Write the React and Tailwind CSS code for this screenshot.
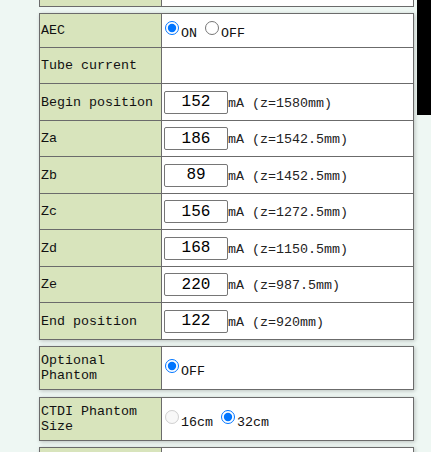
import React from 'react';

const mono = "font-['Liberation_Mono','Courier_New',monospace]";

const currents = [
  { label: 'Begin position', value: '152', z: '1580mm', h: 'h-[37px]' },
  { label: 'Za', value: '186', z: '1542.5mm', h: 'h-[36px]' },
  { label: 'Zb', value: '89', z: '1452.5mm', h: 'h-[37px]' },
  { label: 'Zc', value: '156', z: '1272.5mm', h: 'h-[36px]' },
  { label: 'Zd', value: '168', z: '1150.5mm', h: 'h-[37px]' },
  { label: 'Ze', value: '220', z: '987.5mm', h: 'h-[36px]' },
  { label: 'End position', value: '122', z: '920mm', h: 'h-[37px]' },
];

function Row({ label, h, first, children }) {
  return (
    <div className={`grid grid-cols-[122px_1fr] ${h} ${first ? '' : 'border-t border-[#6b6b6b]'}`}>
      <div className="bg-[#d8e4bc] border-r border-[#6b6b6b] flex items-center pl-[1px] pr-1 leading-[15px]">
        {label}
      </div>
      <div className="flex items-center pl-[2px]">{children}</div>
    </div>
  );
}

function Radio({ checked, disabled, first }) {
  return (
    <input
      type="radio"
      readOnly
      checked={checked}
      disabled={disabled}
      className={`w-[14px] h-[14px] m-0 mr-[2px] align-[2px] ${first ? 'ml-[1px]' : ''} accent-[#0075ff]`}
    />
  );
}

function Box({ children, className = '' }) {
  return (
    <div className={`bg-white border border-[#6b6b6b] shadow-[1px_1px_4px_rgba(0,0,0,0.22)] ${className}`}>
      {children}
    </div>
  );
}

export default function App() {
  return (
    <div className={`relative h-[452px] bg-[#eef7f3] text-[13.33px] text-[#111] ${mono} overflow-hidden`}>
      <div className="absolute top-0 right-0 w-[14px] h-[115px] bg-black" />

      <div className="ml-[39px] w-[375px]">
        {/* tail of the previous table */}
        <div className="h-[7px] grid grid-cols-[122px_1fr] bg-white border-x border-b border-[#6b6b6b]">
          <div className="bg-[#d8e4bc] border-r border-[#6b6b6b]" />
          <div />
        </div>

        <Box className="mt-[6px]">
          <Row label="AEC" h="h-[33px]" first>
            <span className="whitespace-nowrap pt-[4px]">
              <Radio checked first />ON <Radio />OFF
            </span>
          </Row>
          <Row label="Tube current" h="h-[36px]" />
          {currents.map((c) => (
            <Row key={c.label} label={c.label} h={c.h}>
              <span className="whitespace-nowrap">
                <input
                  readOnly
                  value={c.value}
                  className={`w-[64px] h-[23px] border border-[#767676] rounded-[2px] text-center text-[16px] text-black bg-white ${mono}`}
                />
                <span className="text-[#222]">mA (z={c.z})</span>
              </span>
            </Row>
          ))}
        </Box>

        <Box className="mt-[6px]">
          <Row label="Optional Phantom" h="h-[42px]" first>
            <span className="whitespace-nowrap pt-[4px]">
              <Radio checked first />OFF
            </span>
          </Row>
        </Box>

        <Box className="mt-[7px]">
          <Row label="CTDI Phantom Size" h="h-[42px]" first>
            <span className="whitespace-nowrap pt-[4px]">
              <Radio disabled first />16cm <Radio checked />32cm
            </span>
          </Row>
        </Box>

        <Box className="mt-[6px] h-[30px]">
          <div className="grid grid-cols-[122px_1fr] h-full">
            <div className="bg-[#d8e4bc] border-r border-[#6b6b6b]" />
            <div />
          </div>
        </Box>
      </div>
    </div>
  );
}
